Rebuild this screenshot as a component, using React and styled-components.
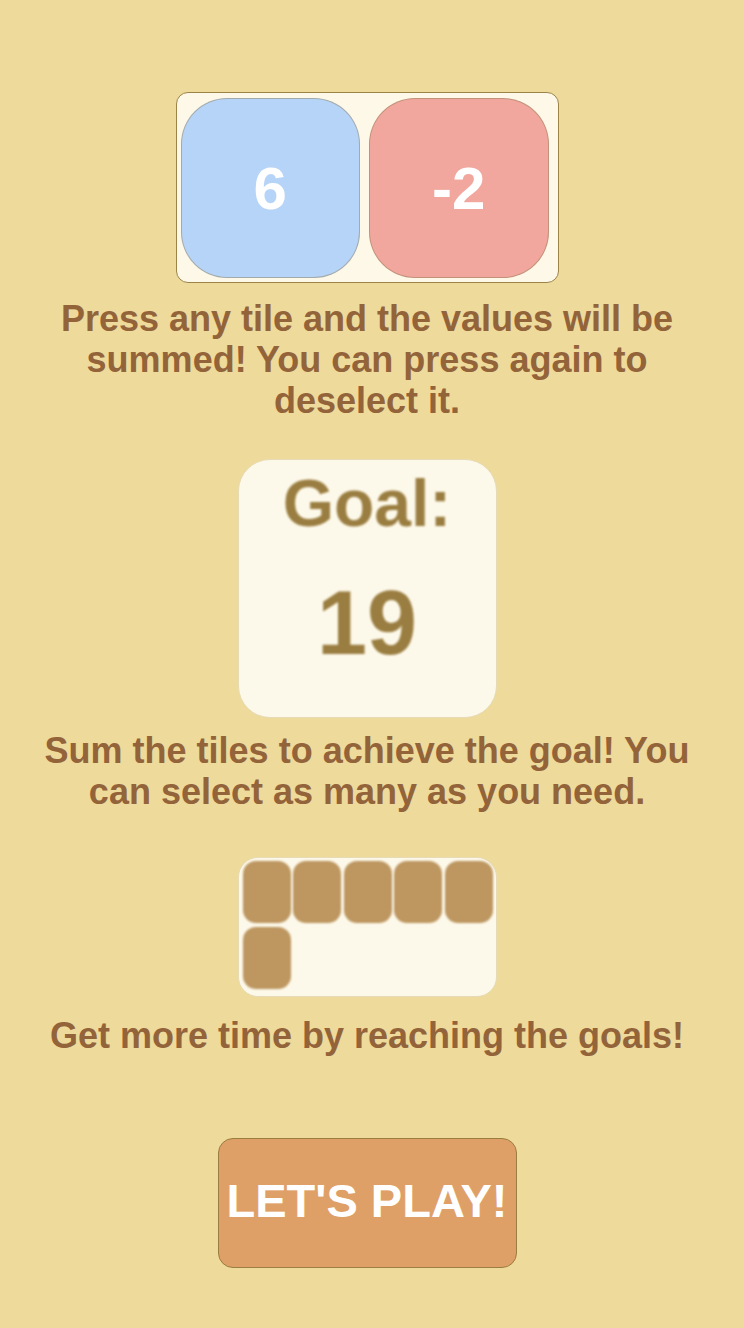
import React from 'react';
import styled, {createGlobalStyle} from 'styled-components';

const GlobalStyle=createGlobalStyle`
    html,body{
        margin:0;
        padding:0;
        background:#EEDA9A;
    }
    body{
        font-family:"Liberation Sans",Arial,sans-serif;
    }
`;

const tiles=[
    {value:'6',color:'#B6D4F7'},
    {value:'-2',color:'#F1A79D'},
];

const timeBlocks=[0,1,2,3,4,5];

export default function App(){
    return(
        <Page>
            <GlobalStyle/>
            <TilePanel>
                {tiles.map(t=>(
                    <Tile key={t.value} $color={t.color}>{t.value}</Tile>
                ))}
            </TilePanel>
            <Hint $top={15}>Press any tile and the values will be summed! You can press again to deselect it.</Hint>

            <GoalCard>
                <GoalLabel>Goal:</GoalLabel>
                <GoalNumber>19</GoalNumber>
            </GoalCard>
            <Hint $top={12}>Sum the tiles to achieve the goal! You can select as many as you need.</Hint>

            <TimerCard>
                {timeBlocks.map(i=>(
                    <TimeBlock key={i}/>
                ))}
            </TimerCard>
            <Hint $top={18}>Get more time by reaching the goals!</Hint>

            <PlayButton>LET'S PLAY!</PlayButton>
        </Page>
    );
}

const Page=styled.div`
    display:flex;
    flex-direction:column;
    align-items:center;
    width:734px;
    min-height:1328px;
    padding-top:92px;
    box-sizing:border-box;
    background:#EEDA9A;
`;

const TilePanel=styled.div`
    display:flex;
    gap:9px;
    padding:5px 9px 5px 4px;
    width:383px;
    height:191px;
    box-sizing:border-box;
    background:#FDF8E8;
    border:1px solid #9C8448;
    border-radius:12px;
`;

const Tile=styled.div`
    display:flex;
    align-items:center;
    justify-content:center;
    width:180px;
    height:180px;
    box-sizing:border-box;
    background:${p=>p.$color};
    border:1px solid rgba(140,120,80,0.45);
    border-radius:46px;
    color:#fff;
    font-weight:bold;
    font-size:60px;
`;

const Hint=styled.p`
    margin:${p=>p.$top}px 0 0;
    max-width:660px;
    color:#93633A;
    font-weight:bold;
    font-size:36px;
    line-height:41px;
    text-align:center;
`;

const GoalCard=styled.div`
    display:flex;
    flex-direction:column;
    align-items:center;
    width:259px;
    height:259px;
    margin-top:38px;
    box-sizing:border-box;
    background:#FDF9EA;
    border:1px solid #E6DBB4;
    border-radius:32px;
    color:#9A7D40;
`;

const GoalLabel=styled.div`
    font-size:66px;
    font-weight:bold;
    line-height:70px;
    margin-top:8px;
    filter:blur(1.2px);
`;

const GoalNumber=styled.div`
    font-size:90px;
    font-weight:bold;
    line-height:90px;
    margin-top:40px;
    filter:blur(1.2px);
`;

const TimerCard=styled.div`
    display:grid;
    grid-template-columns:repeat(5,48px);
    grid-auto-rows:62px;
    column-gap:2.5px;
    row-gap:4px;
    align-content:start;
    width:259px;
    height:140px;
    margin-top:45px;
    padding:3px 4px;
    box-sizing:border-box;
    background:#FDF9EA;
    border:1px solid #E6DBB4;
    border-radius:20px;
`;

const TimeBlock=styled.div`
    background:#BD9660;
    border-radius:13px;
    filter:blur(0.9px);
`;

const PlayButton=styled.button`
    display:flex;
    align-items:center;
    justify-content:center;
    width:299px;
    height:130px;
    margin-top:82px;
    padding:0 0 6px;
    background:#DFA068;
    border:1px solid #9A7D40;
    border-radius:15px;
    color:#fff;
    font-family:"Liberation Sans",Arial,sans-serif;
    font-weight:bold;
    font-size:47px;
    cursor:pointer;
`;
